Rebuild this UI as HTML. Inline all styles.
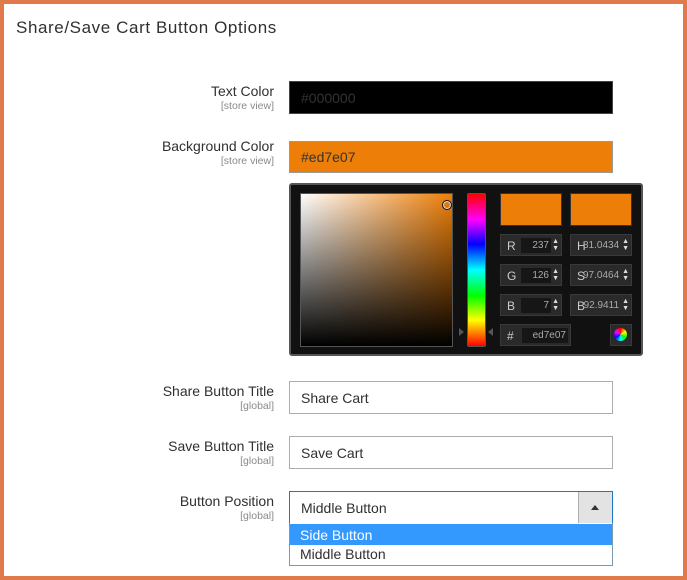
<!DOCTYPE html>
<html><head><style>
*{box-sizing:border-box;margin:0;padding:0}
body{width:687px;height:580px;background:#fff;font-family:"Liberation Sans",sans-serif;position:relative;overflow:hidden}
.frame{position:absolute;left:0;top:0;width:687px;height:580px;border:4px solid #e07a4a;border-top-width:4px}
.a{position:absolute}
h1{position:absolute;left:16px;top:18px;font-size:17px;font-weight:normal;color:#303030;letter-spacing:.6px}
.lbl{position:absolute;right:413px;text-align:right;font-size:14px;color:#303030}
.lbl small{display:block;font-size:10.5px;color:#8a8a8a;margin-top:1px}
.inp{position:absolute;left:289px;width:324px;height:33px;border:1px solid #adadad;font-size:14px;color:#303030;padding:8px 11px}
.row{position:absolute;left:500px;width:62px;height:22px;background:#2a2a2a;border:1px solid #3a3a3a;color:#ccc;font-size:12px}
.row span{position:absolute;left:6px;top:4px}
.row i{position:absolute;right:10px;top:3px;width:30px;height:15px;background:#161616;font-style:normal;font-size:10px;text-align:right;color:#aaa;padding-right:2px;line-height:15px}
.row b{position:absolute;right:2px;top:3px;font-size:7px;color:#ddd;line-height:7px;font-weight:normal}
</style></head><body>
<div class="frame"></div>
<h1>Share/Save Cart Button Options</h1>

<div class="lbl" style="top:83px">Text Color<small>[store view]</small></div>
<div class="inp" style="top:81px;background:#000;color:#333;border-color:#444">#000000</div>

<div class="lbl" style="top:138px">Background Color<small>[store view]</small></div>
<div class="inp" style="top:141px;background:#ed7e07;color:#333;border-color:#999;height:32px;padding-top:7px">#ed7e07</div>

<div class="a" style="left:289px;top:215px;width:1px;height:33px;background:#bbb"></div>
<div class="a" style="left:289px;top:270px;width:1px;height:33px;background:#bbb"></div>

<div class="a" style="left:289px;top:183px;width:354px;height:173px;background:#111;border:2px solid #555;border-radius:3px"></div>
<div class="a" style="left:300px;top:193px;width:153px;height:154px;border:1px solid #555;background:linear-gradient(to top,#000,rgba(0,0,0,0)),linear-gradient(to right,#fff,#ed7e07)"></div>
<div class="a" style="left:442px;top:200px;width:10px;height:10px;border:1px solid #111;border-radius:50%;box-shadow:0 0 0 1px #ddd inset"></div>
<div class="a" style="left:467px;top:193px;width:19px;height:154px;border:1px solid #555;border-radius:2px;background:linear-gradient(to bottom,#f00,#f0f 17%,#00f 33%,#0ff 50%,#0f0 67%,#ff0 83%,#f00)"></div>
<div class="a" style="left:459px;top:328px;width:0;height:0;border-left:5px solid #555;border-top:4px solid transparent;border-bottom:4px solid transparent"></div>
<div class="a" style="left:488px;top:328px;width:0;height:0;border-right:5px solid #555;border-top:4px solid transparent;border-bottom:4px solid transparent"></div>
<div class="a" style="left:500px;top:193px;width:62px;height:33px;background:#ed7e07;border:1px solid #333"></div>
<div class="a" style="left:570px;top:193px;width:62px;height:33px;background:#ed7e07;border:1px solid #333"></div>

<div class="row" style="top:234px"><span>R</span><i>237</i><b>▲<br>▼</b></div>
<div class="row" style="top:264px"><span>G</span><i>126</i><b>▲<br>▼</b></div>
<div class="row" style="top:294px"><span>B</span><i>7</i><b>▲<br>▼</b></div>
<div class="row" style="top:234px;left:570px"><span>H</span><i style="width:38px;background:transparent">31.0434</i><b>▲<br>▼</b></div>
<div class="row" style="top:264px;left:570px"><span>S</span><i style="width:38px;background:transparent">97.0464</i><b>▲<br>▼</b></div>
<div class="row" style="top:294px;left:570px"><span>B</span><i style="width:38px;background:transparent">92.9411</i><b>▲<br>▼</b></div>
<div class="row" style="top:324px;width:71px"><span>#</span><i style="right:2px;width:46px">ed7e07</i></div>
<div class="a" style="left:610px;top:324px;width:22px;height:22px;background:#2a2a2a;border:1px solid #3a3a3a"></div>
<div class="a" style="left:614px;top:328px;width:13px;height:13px;border-radius:50%;background:conic-gradient(#f00,#ff0,#0f0,#0ff,#00f,#f0f,#f00)"></div>

<div class="lbl" style="top:383px">Share Button Title<small>[global]</small></div>
<div class="inp" style="top:381px">Share Cart</div>
<div class="lbl" style="top:438px">Save Button Title<small>[global]</small></div>
<div class="inp" style="top:436px">Save Cart</div>
<div class="lbl" style="top:493px">Button Position<small>[global]</small></div>
<div class="inp" style="top:491px;border-color:#1979c3">Middle Button</div>
<div class="a" style="left:578px;top:492px;width:34px;height:31px;background:#e3e3e3;border-left:1px solid #adadad"></div>
<div class="a" style="left:591px;top:505px;width:0;height:0;border-bottom:5px solid #333;border-left:4px solid transparent;border-right:4px solid transparent"></div>
<div class="a" style="left:289px;top:523px;width:324px;height:43px;border:1px solid #7a9ab0;border-top:none;background:#fff"></div>
<div class="a" style="left:290px;top:524px;width:322px;height:21px;background:#3399ff;color:#fff;font-size:14px;padding:3px 10px">Side Button</div>
<div class="a" style="left:290px;top:545px;width:322px;height:20px;color:#303030;font-size:14px;padding:1px 10px">Middle Button</div>
</body></html>
